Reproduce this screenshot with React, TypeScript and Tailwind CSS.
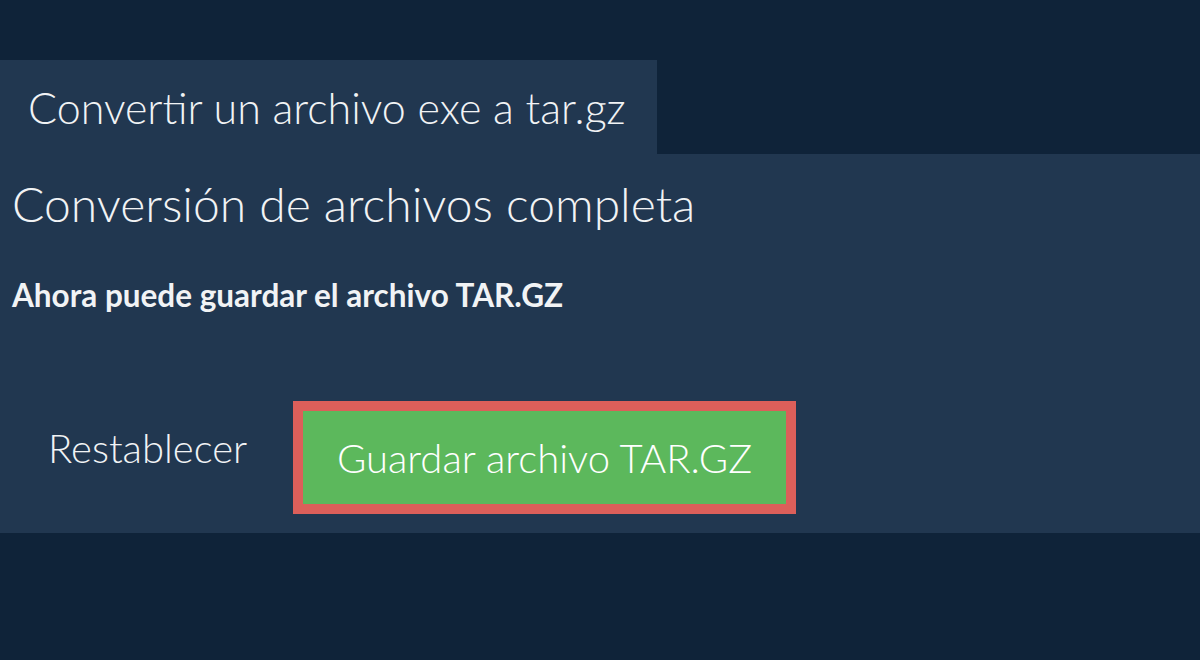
export default function App() {
  return (
    <div className="min-h-[660px] w-full bg-[#0f2339] pt-[60px] font-['Lato','Noto_Sans',sans-serif] text-[#f1f3f5]">
      <div className="flex h-[94px] w-[657px] items-center bg-[#213750] pl-[28px] text-[43px] font-light leading-none">
        Convertir un archivo exe a tar.gz
      </div>
      <div className="h-[379px] bg-[#213750] px-[12px] pt-[22px]">
        <h1 className="text-[48px] font-light leading-[56px]">Conversión de archivos completa</h1>
        <p className="mt-[45px] text-[31.5px] font-bold leading-[36px]">Ahora puede guardar el archivo TAR.GZ</p>
        <div className="mt-[88px] flex items-start pl-[36px]">
          <div className="w-[245px]">
            <button className="mt-[24px] text-[40px] font-light leading-[46px]">Restablecer</button>
          </div>
          <button className="h-[113px] w-[503px] border-[10px] border-[#dc5f5a] bg-[#5cb85c] text-[40px] font-light leading-[48px] text-white">
            Guardar archivo TAR.GZ
          </button>
        </div>
      </div>
    </div>
  );
}
